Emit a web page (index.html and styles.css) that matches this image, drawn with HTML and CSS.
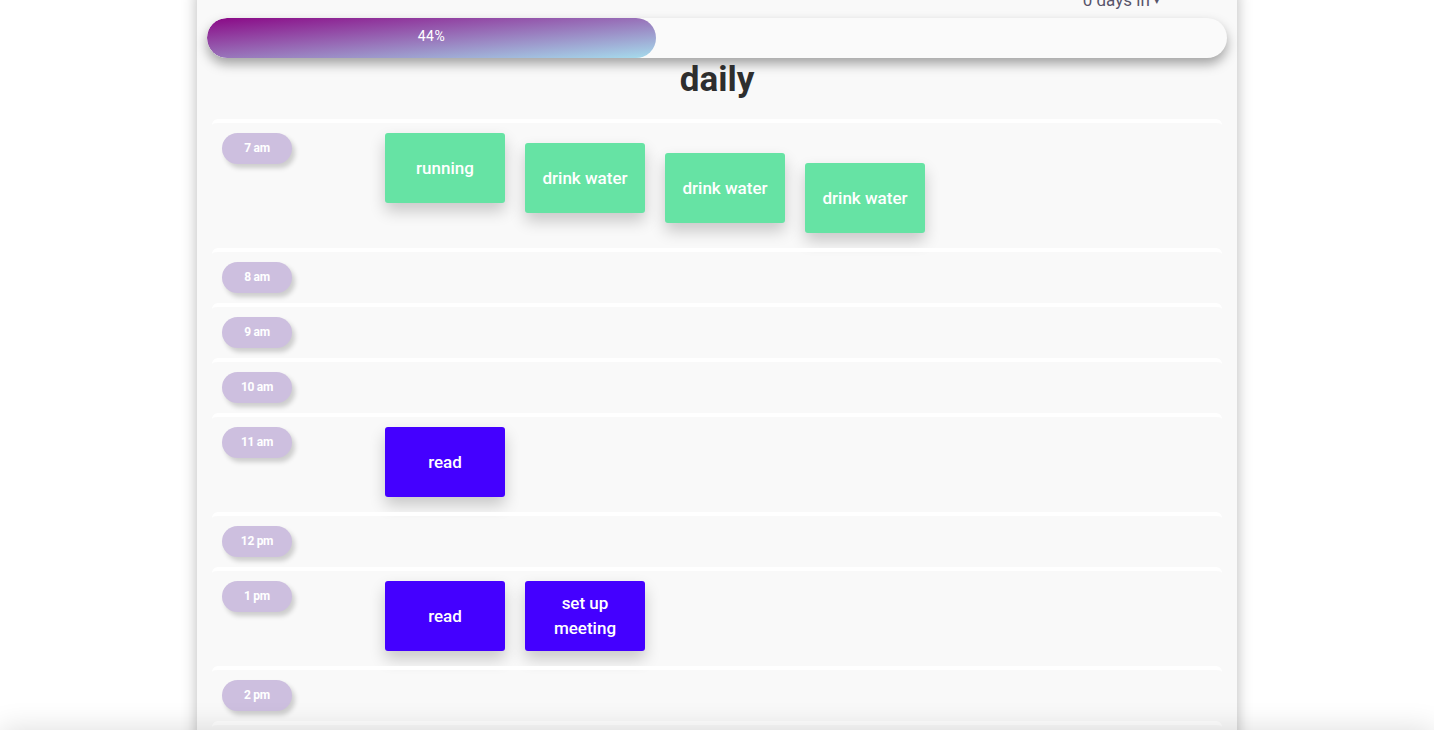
FILE: index.html
```html
<!DOCTYPE html>
<html>
<head>
<meta charset="utf-8">
<link rel="stylesheet" href="styles.css">
</head>
<body>
<div class="panel">
  <div class="topbar"><span class="days">0 days in <span class="caret">▾</span></span></div>
  <div class="progress">
    <div class="progress-fill" style="width:44%">44%</div>
  </div>
  <h1 class="title">daily</h1>
  <div class="schedule">
    <div class="row">
      <div class="time">7 am</div>
      <div class="tasks">
        <div class="task green">running</div>
        <div class="task green off1">drink water</div>
        <div class="task green off2">drink water</div>
        <div class="task green off3">drink water</div>
      </div>
    </div>
    <div class="row"><div class="time">8 am</div><div class="tasks"></div></div>
    <div class="row"><div class="time">9 am</div><div class="tasks"></div></div>
    <div class="row"><div class="time">10 am</div><div class="tasks"></div></div>
    <div class="row">
      <div class="time">11 am</div>
      <div class="tasks"><div class="task blue">read</div></div>
    </div>
    <div class="row"><div class="time">12 pm</div><div class="tasks"></div></div>
    <div class="row">
      <div class="time">1 pm</div>
      <div class="tasks">
        <div class="task blue">read</div>
        <div class="task blue">set up meeting</div>
      </div>
    </div>
    <div class="row"><div class="time">2 pm</div><div class="tasks"></div></div>
    <div class="row"><div class="time">3 pm</div><div class="tasks"></div></div>
  </div>
</div>
<div class="bottom-shade"></div>
</body>
</html>
```

FILE: styles.css
```css
html, body {
  margin: 0;
  padding: 0;
  background: #ffffff;
  font-family: Roboto, "Noto Sans", Arial, sans-serif;
  overflow: hidden;
}

.panel {
  width: 1040px;
  box-sizing: border-box;
  margin: -10px auto 0;
  min-height: 800px;
  padding: 0 10px;
  background: #f9f9f9;
  box-shadow: 0 0 14px rgba(0, 0, 0, 0.28);
}

.topbar {
  display: flex;
  justify-content: flex-end;
  height: 20px;
  margin-bottom: 8px;
}

.days {
  font-size: 17px;
  line-height: 20px;
  color: #57546a;
  margin-right: 67px;
}

.caret {
  font-size: 11px;
  vertical-align: 2px;
}

.progress {
  height: 40px;
  border-radius: 20px;
  background: #fafafa;
  box-shadow: 0 6px 12px rgba(0, 0, 0, 0.35);
  overflow: hidden;
}

.progress-fill {
  height: 100%;
  border-radius: 20px;
  background: linear-gradient(to bottom right, #8a0886, #a6dded);
  color: #ffffff;
  font-size: 14px;
  line-height: 37px;
  text-align: center;
  letter-spacing: 0.5px;
}

.title {
  margin: 2px 0 19px;
  font-size: 35px;
  line-height: 40px;
  font-weight: 700;
  text-align: center;
  color: #2e2e2e;
}

.schedule {
  display: flex;
  flex-direction: column;
}

.row {
  display: flex;
  align-items: flex-start;
  margin: 0 5px;
  padding: 10px 10px 10px;
  border-top: 4px solid #ffffff;
  border-radius: 6px;
}

.time {
  flex: none;
  width: 70px;
  height: 31px;
  border-radius: 16px;
  background: #cdbfdf;
  box-shadow: 3px 4px 5px rgba(0, 0, 0, 0.18);
  color: #ffffff;
  font-size: 12px;
  font-weight: 700;
  letter-spacing: -0.3px;
  line-height: 31px;
  text-align: center;
}

.tasks {
  display: flex;
  align-items: flex-start;
  gap: 20px;
  margin-left: 93px;
}

.task {
  box-sizing: border-box;
  width: 120px;
  height: 70px;
  margin-bottom: 5px;
  padding: 0 10px;
  border-radius: 3px;
  display: flex;
  align-items: center;
  justify-content: center;
  text-align: center;
  color: #ffffff;
  font-size: 17px;
  font-weight: 500;
  line-height: 25px;
  box-shadow: 0 8px 16px rgba(0, 0, 0, 0.2);
}

.green {
  background: #66e3a4;
}

.blue {
  background: #4400ff;
}

.off1 { margin-top: 10px; }
.off2 { margin-top: 20px; }
.off3 { margin-top: 30px; }

.bottom-shade {
  position: fixed;
  left: 0;
  right: 0;
  bottom: -60px;
  height: 60px;
  box-shadow: 0 0 30px rgba(0, 0, 0, 0.14);
}
```
